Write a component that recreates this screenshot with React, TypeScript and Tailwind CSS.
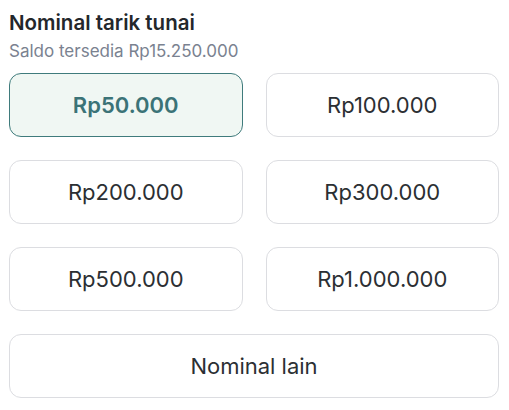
import { useState } from 'react';

const amounts = ['Rp50.000', 'Rp100.000', 'Rp200.000', 'Rp300.000', 'Rp500.000', 'Rp1.000.000'];

export default function App() {
  const [selected, setSelected] = useState('Rp50.000');

  return (
    <div className="min-h-screen bg-white pl-[9px] pr-[10px] pt-[9px] font-['Inter',sans-serif]">
      <h1 className="text-[20.5px] leading-[28px] font-semibold text-[#23272b]">Nominal tarik tunai</h1>
      <p className="mt-[4px] text-[17px] leading-[20px] text-[#7a8290]">Saldo tersedia Rp15.250.000</p>

      <div className="mt-[12px] grid grid-cols-2 gap-x-[23px] gap-y-[23px]">
        {amounts.map((amount) => {
          const active = amount === selected;
          return (
            <button
              key={amount}
              onClick={() => setSelected(amount)}
              className={
                active
                  ? 'h-[64px] rounded-[12px] border-[1.5px] border-[#3f7b7c] bg-[#f0f7f3] text-[22px] font-semibold text-[#3b7377]'
                  : 'h-[64px] rounded-[12px] border border-[#dcdde1] bg-white text-[22px] text-[#2b2f33]'
              }
            >
              {amount}
            </button>
          );
        })}
        <button className="col-span-2 h-[64px] rounded-[12px] border border-[#dcdde1] bg-white text-[22px] text-[#2b2f33]">
          Nominal lain
        </button>
      </div>
    </div>
  );
}
